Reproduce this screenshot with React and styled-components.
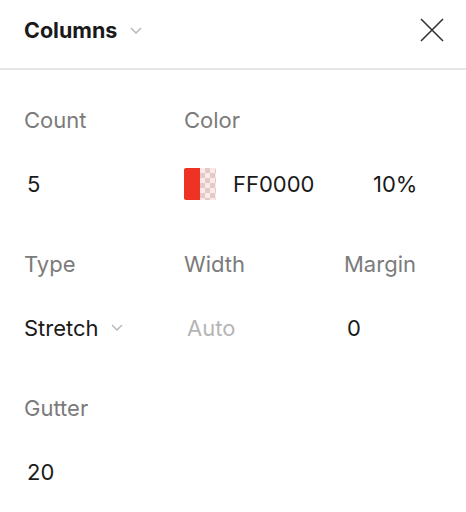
import React from "react";
import styled, { createGlobalStyle } from "styled-components";

const Global = createGlobalStyle`
  html, body {
    margin: 0;
    padding: 0;
    background: #ffffff;
  }
  body {
    font-family: Inter, "Noto Sans", "Liberation Sans", sans-serif;
    -webkit-font-smoothing: antialiased;
  }
`;

const Chevron = ({ size = 12 }) => (
  <svg width={size} height={size / 2 + 1} viewBox="0 0 12 7" fill="none">
    <path d="M1 1l5 5 5-5" stroke="#b3b3b3" strokeWidth="1.3" />
  </svg>
);

const CloseIcon = () => (
  <svg width="24" height="24" viewBox="0 0 24 24" fill="none">
    <path d="M1 1l22 22M23 1L1 23" stroke="#333333" strokeWidth="1.6" />
  </svg>
);

const App = () => {
  return (
    <Panel>
      <Global />
      <Header>
        <Title>
          Columns
          <Chevron />
        </Title>
        <CloseButton>
          <CloseIcon />
        </CloseButton>
      </Header>
      <Body>
        <Field>
          <Label>Count</Label>
          <Value $inset>5</Value>
        </Field>
        <Field $span={2}>
          <Label>Color</Label>
          <Value>
            <Swatch>
              <SwatchSolid />
              <SwatchAlpha />
            </Swatch>
            <Hex>FF0000</Hex>
            <span>10%</span>
          </Value>
        </Field>

        <Field>
          <Label>Type</Label>
          <Value>
            Stretch
            <ChevronWrap>
              <Chevron />
            </ChevronWrap>
          </Value>
        </Field>
        <Field>
          <Label>Width</Label>
          <Value $inset $muted>
            Auto
          </Value>
        </Field>
        <Field>
          <Label>Margin</Label>
          <Value $inset>0</Value>
        </Field>

        <Field>
          <Label>Gutter</Label>
          <Value $inset>20</Value>
        </Field>
      </Body>
    </Panel>
  );
};

const Panel = styled.div`
  width: 466px;
  min-height: 512px;
  background: #fff;
  color: #1a1a1a;
`;

const Header = styled.div`
  display: flex;
  align-items: center;
  justify-content: space-between;
  height: 70px;
  padding: 0 22px 8px 24px;
  box-sizing: border-box;
  border-bottom: 2px solid #e5e5e5;
`;

const Title = styled.div`
  display: flex;
  align-items: center;
  gap: 13px;
  font-size: 21.5px;
  font-weight: 700;
  line-height: 32px;
  color: #1a1a1a;
`;

const CloseButton = styled.div`
  display: flex;
  align-items: center;
  justify-content: center;
  width: 24px;
  height: 24px;
`;

const Body = styled.div`
  display: grid;
  grid-template-columns: 160px 160px 1fr;
  row-gap: 48px;
  padding: 34px 0 0 24px;
`;

const Field = styled.div`
  display: flex;
  flex-direction: column;
  gap: 32px;
  grid-column: span ${(p) => p.$span || 1};
`;

const Label = styled.div`
  font-size: 22px;
  line-height: 32px;
  color: #7b7b7b;
`;

const Value = styled.div`
  display: flex;
  align-items: center;
  height: 32px;
  font-size: 22px;
  line-height: 32px;
  color: ${(p) => (p.$muted ? "#b5b5b5" : "#1a1a1a")};
  padding-left: ${(p) => (p.$inset ? "3px" : "0")};
`;

const ChevronWrap = styled.span`
  display: flex;
  margin-left: 12px;
  margin-top: -2px;
`;

const Swatch = styled.div`
  display: flex;
  width: 32px;
  height: 32px;
  border-radius: 2px;
  overflow: hidden;
  margin-right: 17px;
`;

const SwatchSolid = styled.div`
  width: 16px;
  background: #ee3224;
`;

const SwatchAlpha = styled.div`
  width: 16px;
  background-color: #fde9e6;
  background-image: linear-gradient(45deg, #e0cbca 25%, transparent 25%),
    linear-gradient(-45deg, #e0cbca 25%, transparent 25%),
    linear-gradient(45deg, transparent 75%, #e0cbca 75%),
    linear-gradient(-45deg, transparent 75%, #e0cbca 75%);
  background-size: 10px 10px;
  background-position: 0 0, 0 5px, 5px -5px, -5px 0;
`;

const Hex = styled.span`
  width: 140px;
`;

export default App;
